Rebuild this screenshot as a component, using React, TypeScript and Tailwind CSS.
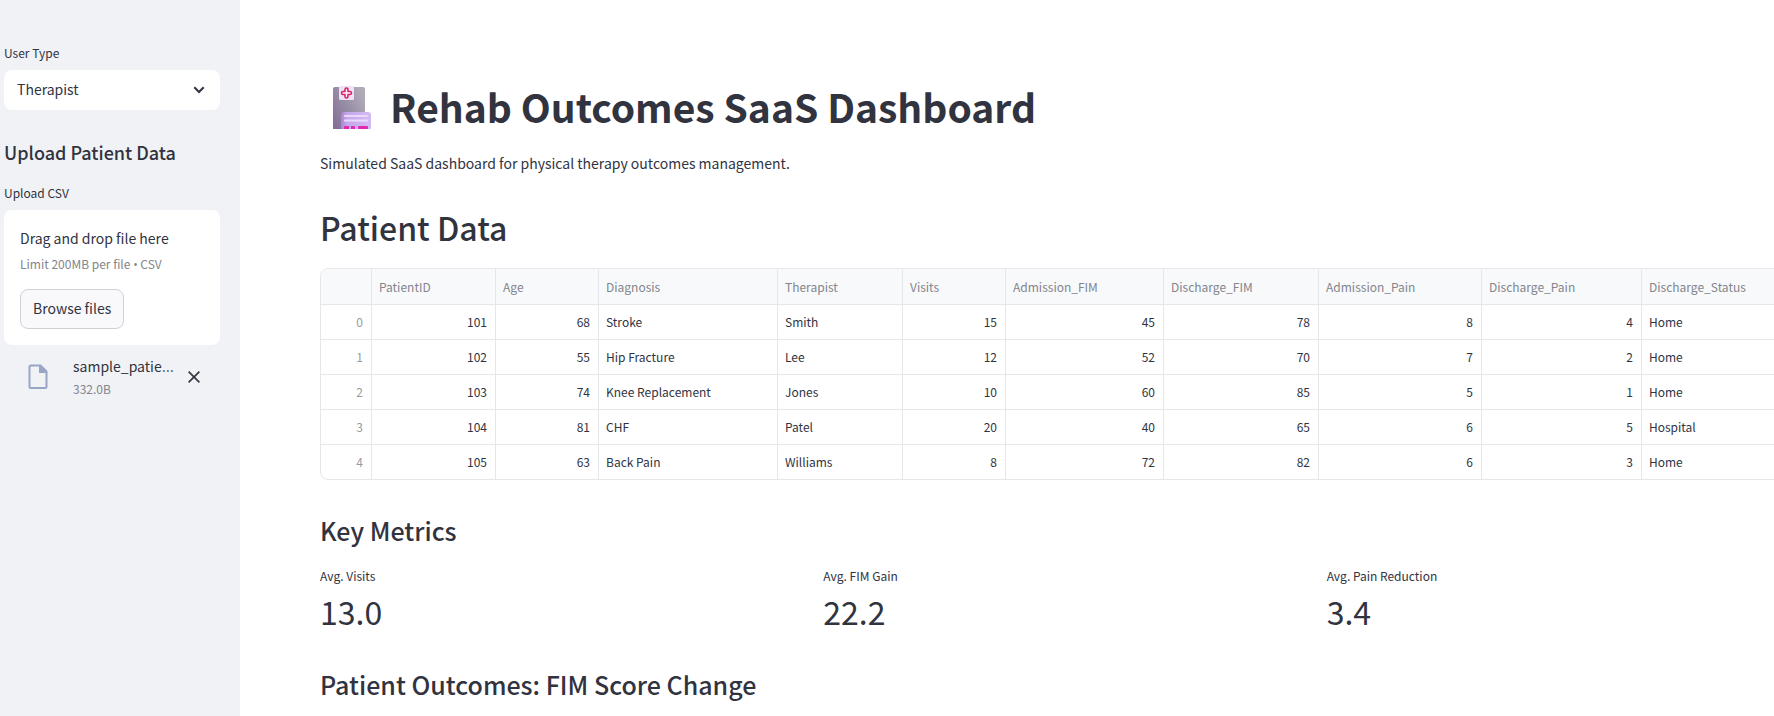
import React from "react";

type Column = { name: string; width: string; numeric: boolean };

const columns: Column[] = [
  { name: "PatientID", width: "w-[124px]", numeric: true },
  { name: "Age", width: "w-[103px]", numeric: true },
  { name: "Diagnosis", width: "w-[179px]", numeric: false },
  { name: "Therapist", width: "w-[125px]", numeric: false },
  { name: "Visits", width: "w-[103px]", numeric: true },
  { name: "Admission_FIM", width: "w-[158px]", numeric: true },
  { name: "Discharge_FIM", width: "w-[155px]", numeric: true },
  { name: "Admission_Pain", width: "w-[163px]", numeric: true },
  { name: "Discharge_Pain", width: "w-[160px]", numeric: true },
  { name: "Discharge_Status", width: "w-auto", numeric: false },
];

const patients: (string | number)[][] = [
  [101, 68, "Stroke", "Smith", 15, 45, 78, 8, 4, "Home"],
  [102, 55, "Hip Fracture", "Lee", 12, 52, 70, 7, 2, "Home"],
  [103, 74, "Knee Replacement", "Jones", 10, 60, 85, 5, 1, "Home"],
  [104, 81, "CHF", "Patel", 20, 40, 65, 6, 5, "Hospital"],
  [105, 63, "Back Pain", "Williams", 8, 72, 82, 6, 3, "Home"],
];

const metrics = [
  { label: "Avg. Visits", value: "13.0" },
  { label: "Avg. FIM Gain", value: "22.2" },
  { label: "Avg. Pain Reduction", value: "3.4" },
];

function HospitalIcon() {
  return (
    <svg viewBox="0 0 38 43" className="mt-0.5 h-[43px] w-[38px] shrink-0" aria-hidden="true">
      <defs>
        <linearGradient id="tower" x1="0" y1="1" x2="1" y2="0.3">
          <stop offset="0" stopColor="#826a9a" />
          <stop offset="0.5" stopColor="#958ba2" />
          <stop offset="1" stopColor="#b1aab9" />
        </linearGradient>
        <linearGradient id="annex" x1="0" y1="0" x2="1" y2="0">
          <stop offset="0" stopColor="#a987cf" />
          <stop offset="0.2" stopColor="#c6a5ec" />
          <stop offset="1" stopColor="#d3bcf2" />
        </linearGradient>
      </defs>
      <path d="M0 43V3q0-2 2-2h28q2 0 2 2v40z" fill="url(#tower)" />
      <path d="M8 43V29q0-3 3-3h24q3 0 3 3v14z" fill="url(#annex)" />
      <rect x="6" y="0" width="15" height="14" rx="1.5" fill="#ece2f8" />
      <path
        d="M12 3.500q0-1.500 1.500-1.500t1.500 1.500v2h2q1.500 0 1.500 1.500t-1.500 1.500h-2v2q0 1.500-1.500 1.500t-1.500-1.500v-2h-2q-1.500 0-1.500-1.500t1.500-1.500h2z"
        fill="#f7effc"
        stroke="#dc2469"
        strokeWidth="1.600"
        strokeLinejoin="round"
      />
      <path d="M12 30h22M12 34.500h22" stroke="#ead9fb" strokeWidth="2.200" strokeLinecap="round" />
      <path d="M11 43v-2q0-1 1-1h4v3zM18 43v-3h3q1 0 1 1v2zM25 43v-2q0-1 1-1h8q1 0 1 1v2z" fill="#df2aae" />
    </svg>
  );
}

function Sidebar() {
  return (
    <aside className="min-h-screen w-60 shrink-0 bg-[#f0f2f6] pt-[43px] pr-5 pl-1">
      <label htmlFor="user-type" className="block text-[12px] leading-5">
        User Type
      </label>
      <div className="relative mt-[7px]">
        <select
          id="user-type"
          defaultValue="Therapist"
          className="h-10 w-full appearance-none rounded-lg bg-white pr-9 pb-0.5 pl-[13px] text-[14px]"
        >
          <option>Therapist</option>
        </select>
        <svg
          viewBox="0 0 12 8"
          className="pointer-events-none absolute top-4 right-[15px] h-2 w-3"
          fill="none"
          stroke="#31333f"
          strokeWidth="2"
          aria-hidden="true"
        >
          <path d="M1.300 1.300 6 6l4.700-4.700" />
        </svg>
      </div>

      <h3 className="mt-[30px] text-[18px] leading-6 font-medium">Upload Patient Data</h3>

      <div className="mt-[19px] text-[12px] leading-5">Upload CSV</div>
      <section className="mt-[7px] rounded-lg bg-white p-4" aria-label="Upload CSV">
        <p className="text-[14px] leading-6">Drag and drop file here</p>
        <p className="mt-1 text-[12px] leading-5 text-[#83858c]">
          Limit 200MB per file <span className="font-['Open_Sans',sans-serif]">•</span> CSV
        </p>
        <button
          type="button"
          className="mt-[14px] block h-10 rounded-lg border border-[#d0d1d5] bg-[#f9f9fb] px-3 pb-0.5 text-[14px]"
        >
          Browse files
        </button>
      </section>

      <div className="mt-[9px] flex items-center pr-4 pl-6">
        <svg viewBox="0 0 20 26" className="mr-[25px] h-[26px] w-5 shrink-0" aria-hidden="true">
          <path
            d="M3 1.500h9.500l6 6V22.500q0 1.500-1.500 1.500H3q-1.500 0-1.500-1.500V3q0-1.500 1.500-1.500z"
            fill="none"
            stroke="#97a6c3"
            strokeWidth="2"
          />
          <path d="M11 1v8h8.500z" fill="#97a6c3" />
        </svg>
        <div className="min-w-0 flex-1">
          <div className="text-[14px] leading-6 whitespace-nowrap">
            sample_patie<span className="font-['Inter',sans-serif]">…</span>
          </div>
          <div className="text-[12px] leading-5 text-[#83858c]">332.0B</div>
        </div>
        <button type="button" aria-label="Remove file" className="flex size-5 shrink-0 items-center justify-center">
          <svg viewBox="0 0 12 12" className="size-3" stroke="#31333f" strokeWidth="1.600" aria-hidden="true">
            <path d="M.6.6l10.800 10.800M11.400.6.6 11.400" />
          </svg>
        </button>
      </div>
    </aside>
  );
}

function PatientTable() {
  return (
    <div className="mt-[21px] overflow-hidden rounded-lg border border-[#e6e7ea]">
      <table className="w-full table-fixed border-separate border-spacing-0 text-[12px] leading-5">
        <thead>
          <tr className="h-9 bg-[#f8f9fb] text-left text-[#83858c]">
            <th className="w-[51px] border-r border-b border-[#e6e7ea]" aria-label="Index" />
            {columns.map((c) => (
              <th key={c.name} className={`${c.width} border-r border-b border-[#e6e7ea] px-[7px] font-normal`}>
                {c.name}
              </th>
            ))}
          </tr>
        </thead>
        <tbody className="[&>tr:last-child]:h-[34px] [&>tr:last-child>*]:border-b-0">
          {patients.map((row, i) => (
            <tr key={i} className="h-[35px]">
              <th className="border-r border-b border-[#e6e7ea] px-2 text-right font-normal text-[#979aa2]">{i}</th>
              {row.map((value, j) => (
                <td
                  key={j}
                  className={`border-r border-b border-[#e6e7ea] pr-2 pl-[7px] ${columns[j].numeric ? "text-right" : "text-left"}`}
                >
                  {value}
                </td>
              ))}
            </tr>
          ))}
        </tbody>
      </table>
    </div>
  );
}

export default function App() {
  return (
    <div className="flex min-h-screen overflow-hidden bg-white font-['Noto_Sans_CJK_SC',sans-serif] text-[#31333f]">
      <Sidebar />
      <main className="min-w-0 flex-1 pt-20 pl-20">
        <div className="-mr-10">
          <h1 className="flex items-center gap-[19px] pl-[13px] text-[39px] leading-[52px] font-bold whitespace-nowrap">
            <HospitalIcon />
            Rehab Outcomes SaaS Dashboard
          </h1>
          <p className="mt-[19px] text-[14px] leading-6">
            Simulated SaaS dashboard for physical therapy outcomes management.
          </p>

          <h2 className="mt-8 text-[32px] leading-10 font-medium">Patient Data</h2>
          <PatientTable />

          <h3 className="mt-[34px] text-[25px] leading-8 font-medium">Key Metrics</h3>
          <dl className="mt-5 grid grid-cols-3 gap-4">
            {metrics.map((m) => (
              <div key={m.label}>
                <dt className="text-[12px] leading-5">{m.label}</dt>
                <dd className="mt-[3px] text-[32px] leading-[44px]">{m.value}</dd>
              </div>
            ))}
          </dl>

          <h3 className="mt-[35px] text-[25px] leading-8 font-medium">Patient Outcomes: FIM Score Change</h3>
        </div>
      </main>
    </div>
  );
}
